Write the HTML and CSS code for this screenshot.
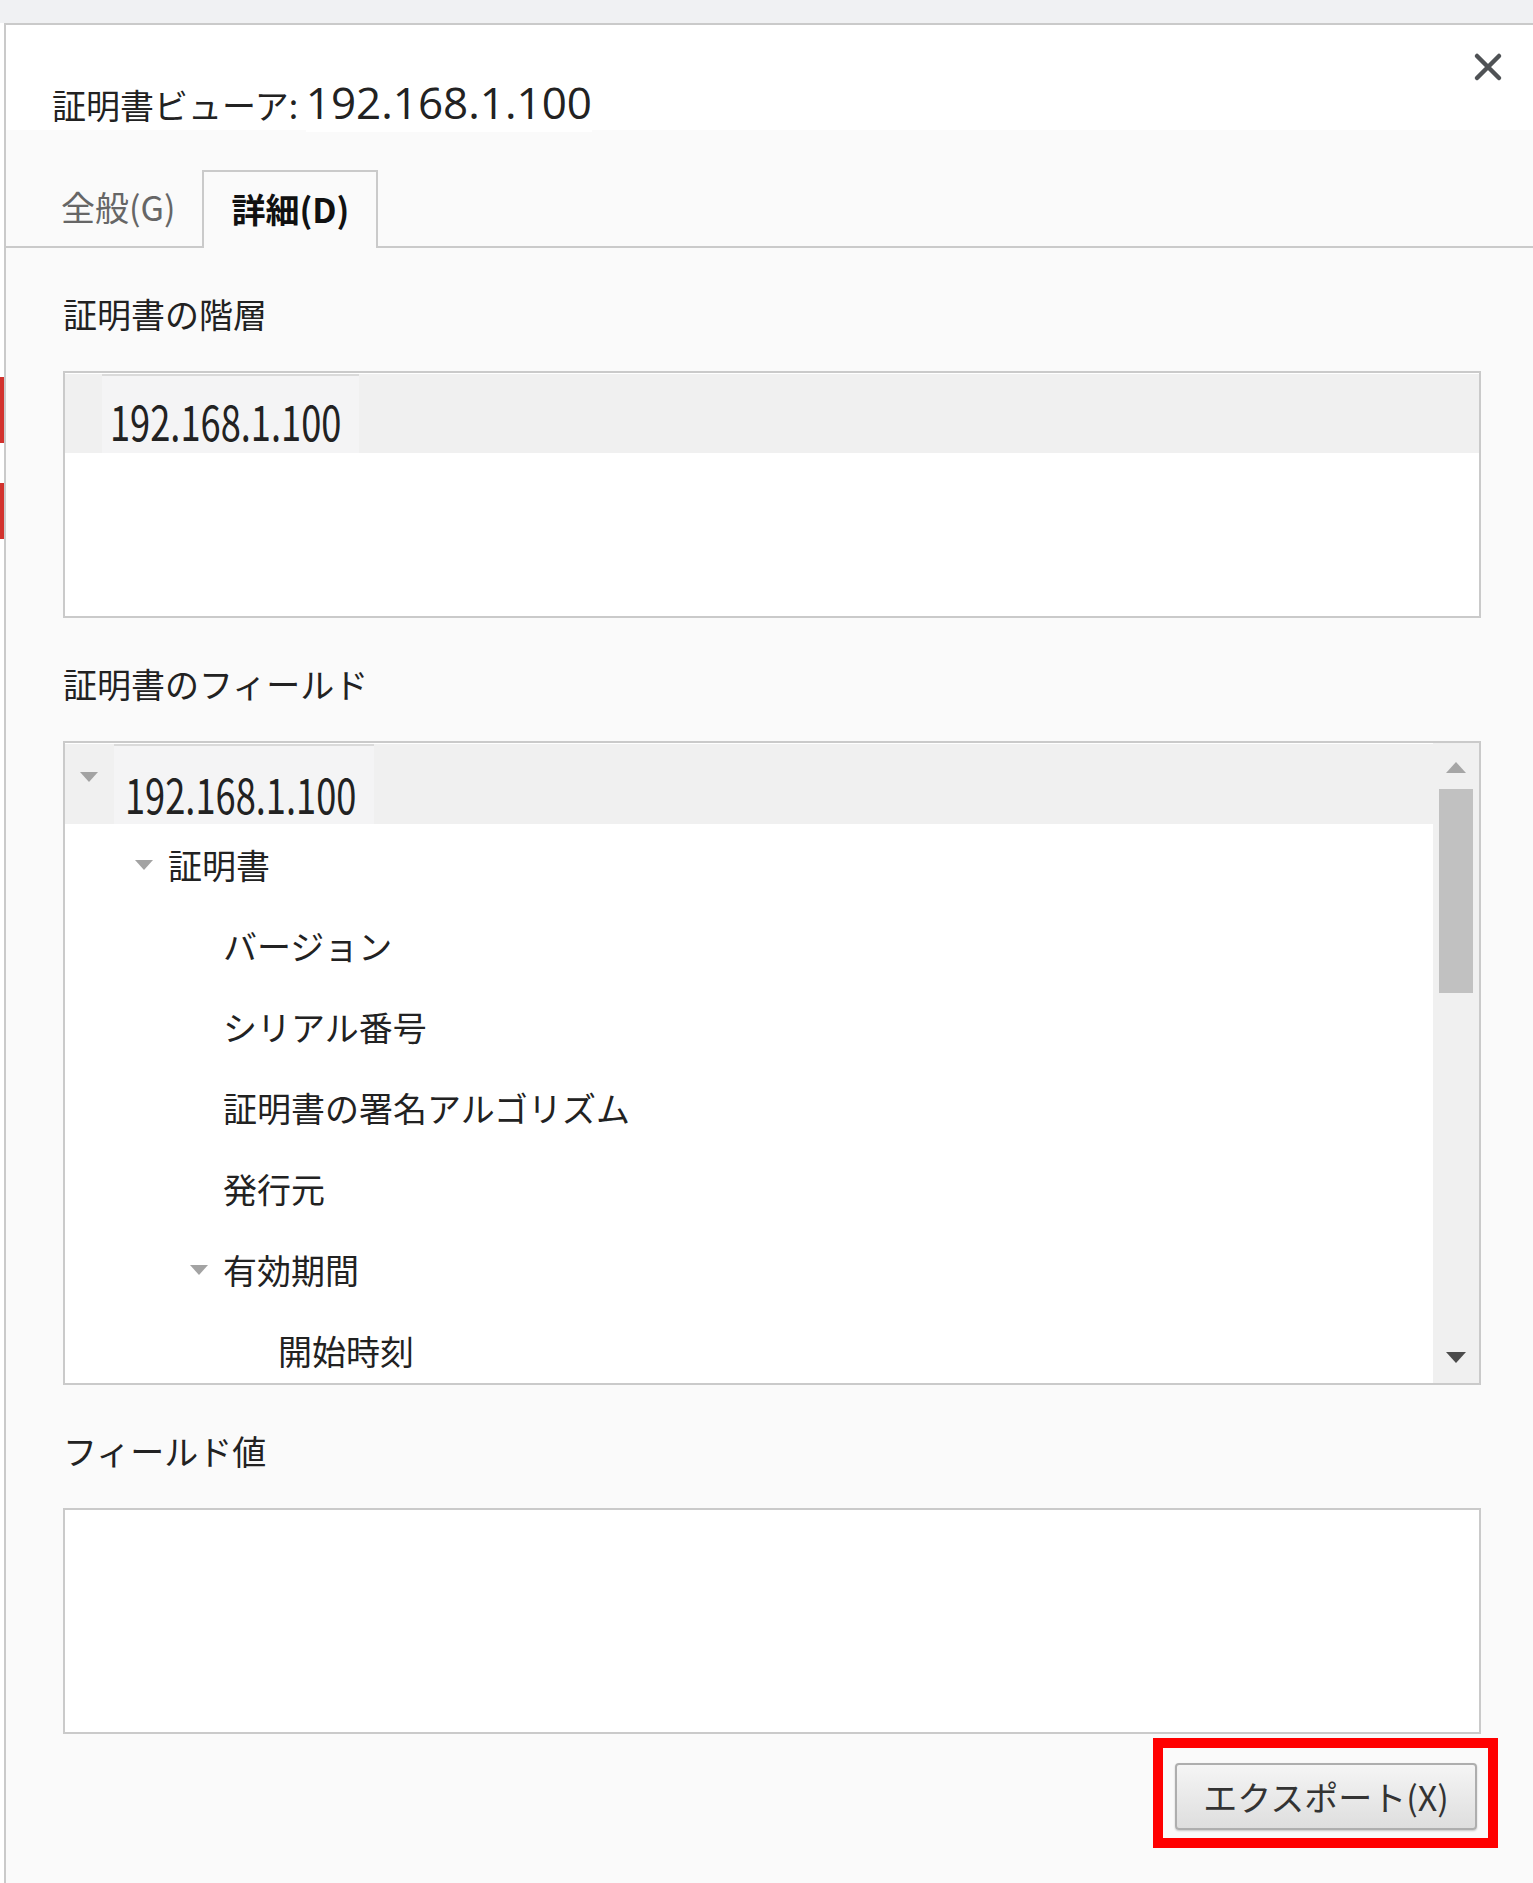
FILE: index.html
```html
<!DOCTYPE html>
<html lang="ja">
<head>
  <meta charset="UTF-8" />
  <meta name="viewport" content="width=device-width, initial-scale=1.0" />
  <title>証明書ビューア</title>
  <link rel="stylesheet" href="styles.css">
</head>
<body>
  <div class="topbar"></div>
  <div class="screen">
    <div class="backdrop"><span class="mark mark-a"></span><span class="mark mark-b"></span></div>

    <div class="dialog">
      <header class="dialog-head">
        <h1 class="dialog-title">証明書ビューア: <span class="host">192.168.1.100</span></h1>
        <button class="close" aria-label="閉じる">
          <svg width="30" height="30" viewBox="0 0 30 30"><path d="M4 4 L26 26 M26 4 L4 26" stroke="#4f5255" stroke-width="4.5" stroke-linecap="round" fill="none"/></svg>
        </button>
      </header>

      <nav class="tabs">
        <span class="tab">全般(G)</span>
        <span class="tab active">詳細(D)</span>
      </nav>

      <section class="panel">
        <h2 class="label">証明書の階層</h2>
        <div class="box hierarchy">
          <div class="row selected"><span class="hl"><span class="num">192.168.1.100</span></span></div>
        </div>

        <h2 class="label">証明書のフィールド</h2>
        <div class="box fields">
          <div class="tree">
            <div class="row selected lv0"><span class="tw open"></span><span class="hl"><span class="num">192.168.1.100</span></span></div>
            <div class="row lv1"><span class="tw open"></span><span>証明書</span></div>
            <div class="row lv2"><span class="tw"></span><span>バージョン</span></div>
            <div class="row lv2"><span class="tw"></span><span>シリアル番号</span></div>
            <div class="row lv2"><span class="tw"></span><span>証明書の署名アルゴリズム</span></div>
            <div class="row lv2"><span class="tw"></span><span>発行元</span></div>
            <div class="row lv2"><span class="tw open"></span><span>有効期間</span></div>
            <div class="row lv3"><span class="tw"></span><span>開始時刻</span></div>
          </div>
          <div class="scrollbar">
            <span class="arrow up"></span>
            <span class="thumb"></span>
            <span class="arrow down"></span>
          </div>
        </div>

        <h2 class="label">フィールド値</h2>
        <div class="box value"></div>

        <div class="actions">
          <div class="callout"><button class="btn">エクスポート(X)</button></div>
        </div>
      </section>
    </div>
  </div>
</body>
</html>
```

FILE: styles.css
```css
body { margin: 0; background: #fff; font-family: "Noto Sans CJK JP", sans-serif; color: #222; }
.topbar { height: 23px; background: #f0f1f3; }
.screen { display: flex; min-height: 1860px; }

.backdrop { width: 4px; flex: none; display: flex; flex-direction: column; padding-top: 354px; gap: 40px; }
.mark { display: block; background: #d2322d; }
.mark-a { height: 66px; }
.mark-b { height: 56px; }

.dialog { flex: 1; background: #fafafa; border-top: 2px solid #cacaca; border-left: 2px solid #cacaca; }

.dialog-head { height: 105px; background: #fff; display: flex; justify-content: space-between; padding: 0 30px 0 46px; }
.dialog-title { align-self: flex-end; margin: 0 0 3px; font-size: 34px; font-weight: normal; line-height: 44px; color: #222; }
.host { font-family: "Open Sans", sans-serif; font-size: 44px; background: #fff; }
.close { margin-top: 27px; width: 30px; height: 30px; padding: 0; border: none; background: none; cursor: pointer; }

.tabs { height: 116px; display: flex; align-items: flex-end; padding-left: 28px; border-bottom: 2px solid #cacaca; }
.tab { height: 76px; line-height: 74px; padding: 0 27px; font-size: 34px; color: #666; }
.tab.active { padding: 0 27px; border: 2px solid #cacaca; border-bottom: 0; margin-bottom: -2px; background: #fafafa; color: #111; font-weight: bold; }

.panel { padding: 46px 52px 0 57px; }
.label { margin: 0 0 37px; font-size: 34px; line-height: 40px; font-weight: normal; color: #222; }
.box { border: 2px solid #cacaca; background: #fff; box-sizing: border-box; }
.box + .label { margin-top: 46px; }

.row { display: flex; align-items: center; height: 81px; font-size: 34px; white-space: nowrap; }
.row.selected { background: #f0f0f0; }
.hl { align-self: stretch; display: flex; align-items: center; background: #f4f4f5; border-top: 2px solid #dadada; padding: 0 18px 0 8px; }
.num { display: inline-block; font-size: 48px; padding-top: 10px; transform: scaleX(.755); transform-origin: left center; margin-right: -75px; color: #222; }

.hierarchy { height: 247px; padding-top: 1px; }
.hierarchy .row { height: 79px; padding-left: 37px; }

.fields { height: 644px; display: flex; }
.tree { flex: 1; overflow: hidden; padding-top: 1px; }
.tree .row.selected { height: 80px; }
.tw { width: 22px; flex: none; margin-right: 13px; display: flex; justify-content: center; }
.tw.open::before { content: ""; border-left: 9px solid transparent; border-right: 9px solid transparent; border-top: 10px solid #a3a3a3; }
.lv0 { padding-left: 13px; }
.lv0 .tw { margin-right: 14px; margin-bottom: 14px; }
.lv0 .hl { padding-left: 11px; }
.lv0 .num { padding-top: 16px; }
.lv1 { padding-left: 68px; }
.lv2 { padding-left: 123px; }
.lv3 { padding-left: 178px; }

.scrollbar { width: 46px; flex: none; background: #f0f0f0; display: flex; flex-direction: column; align-items: center; padding: 19px 0 20px; box-sizing: border-box; }
.arrow { width: 0; height: 0; border-left: 10px solid transparent; border-right: 10px solid transparent; }
.arrow.up { border-bottom: 11px solid #a6a6a6; }
.arrow.down { border-top: 11px solid #4c4c4c; margin-top: auto; }
.thumb { width: 34px; height: 204px; margin-top: 16px; background: #c1c1c1; }

.value { height: 226px; }

.actions { display: flex; justify-content: flex-end; margin: 4px -17px 0 0; }
.callout { border: 10px solid #ff0000; padding: 15px 11px 8px 12px; }
.btn { width: 302px; height: 67px; border: 2px solid #aeaeae; border-radius: 4px; background: linear-gradient(#f5f5f5, #dedede); box-shadow: 0 1px 2px rgba(0,0,0,0.2); font-family: "Noto Sans CJK JP", sans-serif; font-size: 34px; color: #333; cursor: pointer; }
```
